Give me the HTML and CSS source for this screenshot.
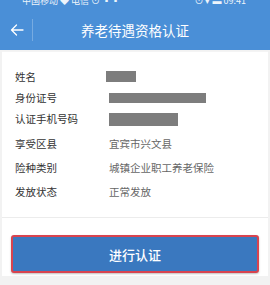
FILE: index.html
```html
<!DOCTYPE html>
<html>
<head>
<meta charset="utf-8">
<link rel="stylesheet" href="styles.css">
</head>
<body>
<div class="page">
  <header class="top">
    <div class="status">
      <span class="st-left">中国移动 ◆ 电信 ⊙ ▪▪</span>
      <span class="st-right">⊙ ▾ ▬ 09:41</span>
    </div>
    <div class="nav">
      <div class="back">
        <svg width="14" height="12" viewBox="0 0 14 12"><path d="M13 6H1.5M6.5 1L1.5 6l5 5" fill="none" stroke="#fff" stroke-width="1.3" stroke-linecap="round" stroke-linejoin="round"/></svg>
      </div>
      <div class="divider"></div>
      <div class="title">养老待遇资格认证</div>
    </div>
  </header>
  <section class="card">
    <div class="row"><span class="label">姓名</span><span class="val"><i class="mask mask-name"></i></span></div>
    <div class="row"><span class="label">身份证号</span><span class="val"><i class="mask mask-id"></i></span></div>
    <div class="row"><span class="label">认证手机号码</span><span class="val"><i class="mask mask-phone"></i></span></div>
    <div class="row tall first-tall"><span class="label">享受区县</span><span class="val">宜宾市兴文县</span></div>
    <div class="row tall"><span class="label">险种类别</span><span class="val">城镇企业职工养老保险</span></div>
    <div class="row tall"><span class="label">发放状态</span><span class="val">正常发放</span></div>
  </section>
  <section class="actions">
    <button class="btn">进行认证</button>
  </section>
</div>
</body>
</html>
```
FILE: styles.css
```css
* { box-sizing: border-box; margin: 0; padding: 0; }
html, body { width: 270px; height: 285px; overflow: hidden; }
body {
  background: #f2f2f2;
  font-family: "Noto Sans CJK SC", "Noto Sans", sans-serif;
}
.page { display: flex; flex-direction: column; }
.top { background: #4a8fd7; height: 50px; display: flex; flex-direction: column; }
.status {
  height: 10px; overflow: hidden; display: flex; justify-content: space-between;
  padding: 0 24px 0 22px; color: #fff; font-size: 9px; line-height: 9px;
}
.status span { margin-top: -4px; opacity: .9; }
.nav { height: 40px; display: flex; align-items: center; position: relative; }
.back { width: 32px; display: flex; justify-content: center; padding-left: 2px; }
.back svg { display: block; }
.divider { width: 1px; height: 22px; background: rgba(255,255,255,.25); }
.title {
  position: absolute; left: 0; right: 0; text-align: center;
  color: #fff; font-size: 13.5px; line-height: 40px; pointer-events: none;
}
.card {
  background: #fff; margin: 1px 2px 0; border-top: 1px solid #f4f4f4;
  padding: 14px 0 14px 13px; border-bottom: 1px solid #ececec;
}
.row { display: flex; align-items: center; height: 21px; font-size: 10.5px; }
.row.tall { height: 24px; }
.row.first-tall { margin-top: 2px; }
.label { width: 94px; color: #333; }
.val { color: #666; display: flex; align-items: center; }
.mask { display: block; background: #7d7d7d; }
.mask-name { width: 30px; height: 11px; margin-left: -3px; }
.mask-id { width: 97px; height: 10px; }
.mask-phone { width: 69px; height: 13px; margin-top: 1px; }
.actions { background: #fff; margin: 0 2px; padding: 17px 9px 3px; height: 58px; }
.btn {
  display: block; width: 100%; height: 38px; background: #3a78bf;
  border: 2px solid #d8434f; border-radius: 3px; color: #fff;
  font-family: "Noto Sans CJK SC", sans-serif; font-size: 13px; font-weight: 500;
  box-shadow: 0 1px 2px rgba(0,0,0,.25);
}
```
